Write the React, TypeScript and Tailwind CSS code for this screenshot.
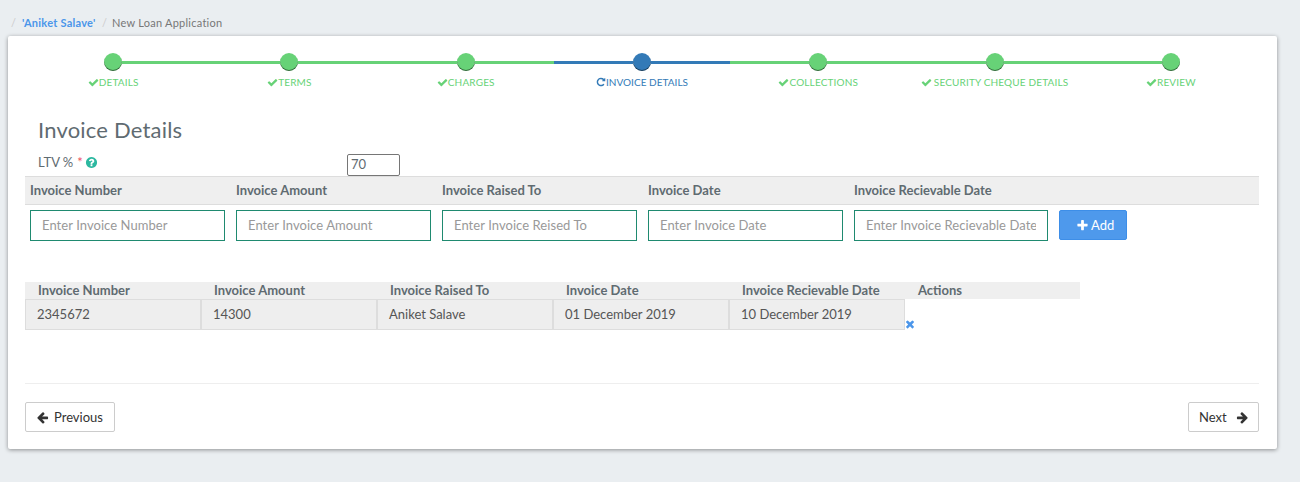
import React from 'react';

const paths = {
  check:
    'M1671 566q0 40-28 68l-724 724-136 136q-28 28-68 28t-68-28l-136-136-362-362q-28-28-28-68t28-68l136-136q28-28 68-28t68 28l294 295 656-657q28-28 68-28t68 28l136 136q28 28 28 68z',
  plus: 'M1600 736v192q0 40-28 68t-68 28h-416v416q0 40-28 68t-68 28h-192q-40 0-68-28t-28-68v-416h-416q-40 0-68-28t-28-68v-192q0-40 28-68t68-28h416v-416q0-40 28-68t68-28h192q40 0 68 28t28 68v416h416q40 0 68 28t28 68z',
  times:
    'M1490 1322q0 40-28 68l-136 136q-28 28-68 28t-68-28l-294-294-294 294q-28 28-68 28t-68-28l-136-136q-28-28-28-68t28-68l294-294-294-294q-28-28-28-68t28-68l136-136q28-28 68-28t68 28l294 294 294-294q28-28 68-28t68 28l136 136q28 28 28 68t-28 68l-294 294 294 294q28 28 28 68z',
  left: 'M1664 896v128q0 53-32.5 90.5t-84.5 37.5h-704l293 294q38 36 38 90t-38 90l-75 76q-37 37-90 37-52 0-91-37l-651-652q-37-37-37-90 0-52 37-91l651-650q38-38 91-38 52 0 90 38l75 74q38 38 38 91t-38 91l-293 293h704q52 0 84.5 37.5t32.5 90.5z',
  right:
    'M1600 960q0 54-37 91l-651 651q-39 37-91 37-51 0-90-37l-75-75q-38-38-38-91t38-91l293-293h-704q-52 0-84.5-37.5t-32.5-90.5v-128q0-53 32.5-90.5t84.5-37.5h704l-293-294q-38-36-38-90t38-90l75-75q38-38 90-38 53 0 91 38l651 651q37 35 37 90z',
  question:
    'M1024 1376v-192q0-14-9-23t-23-9h-192q-14 0-23 9t-9 23v192q0 14 9 23t23 9h192q14 0 23-9t9-23zm256-672q0-88-55.5-163t-138.5-116-170-41q-243 0-371 213-15 24 8 42l132 100q7 6 19 6 16 0 25-12 53-68 86-92 34-24 86-24 48 0 85.500 26t37.500 59q0 38-20 61t-68 45q-63 28-115.500 86.500t-52.500 125.500v36q0 14 9 23t23 9h192q14 0 23-9t9-23q0-19 21.500-49.500t54.500-49.500q32-18 49-28.500t46-35 44.500-48 28-60.500 12.500-81zm384 192q0 209-103 385.500t-279.500 279.500-385.500 103-385.500-103-279.500-279.500-103-385.500 103-385.500 279.500-279.500 385.500-103 385.500 103 279.500 279.500 103 385.500z',
  repeat:
    'M1664 256v448q0 26-19 45t-45 19h-448q-42 0-59-40-17-39 14-69l138-138q-148-137-349-137-104 0-198.500 40.500t-163.500 109.500-109.500 163.500-40.500 198.500 40.500 198.500 109.500 163.500 163.500 109.500 198.500 40.500q119 0 225-52t179-147q7-10 23-12 15 0 25 9l137 138q9 8 9.500 20.500t-7.500 22.500q-109 132-264 204.500t-327 72.500q-156 0-298-61t-245-164-164-245-61-298 61-298 164-245 245-164 298-61q147 0 284.500 55.500t244.500 156.500l130-129q29-31 70-14 39 17 39 59z',
};

function Icon({ name, className }: { name: keyof typeof paths; className: string }) {
  return (
    <svg viewBox="0 0 1792 1792" className={`shrink-0 fill-current ${className}`}>
      <path d={paths[name]} />
    </svg>
  );
}

type Step = { label: string; current?: boolean; spaced?: boolean };

const steps: Step[] = [
  { label: 'DETAILS' },
  { label: 'TERMS' },
  { label: 'CHARGES' },
  { label: 'INVOICE DETAILS', current: true },
  { label: 'COLLECTIONS' },
  { label: 'SECURITY CHEQUE DETAILS', spaced: true },
  { label: 'REVIEW' },
];

const fields = [
  { label: 'Invoice Number', hint: 'Enter Invoice Number' },
  { label: 'Invoice Amount', hint: 'Enter Invoice Amount' },
  { label: 'Invoice Raised To', hint: 'Enter Invoice Reised To' },
  { label: 'Invoice Date', hint: 'Enter Invoice Date' },
  { label: 'Invoice Recievable Date', hint: 'Enter Invoice Recievable Date' },
];

const row = ['2345672', '14300', 'Aniket Salave', '01 December 2019', '10 December 2019'];

function Stepper() {
  return (
    <ol className="grid grid-cols-7">
      {steps.map((s, i) => (
        <li key={s.label} className={`flex flex-col items-center ${s.current ? 'text-[#337ab7]' : 'text-[#67d277]'}`}>
          <div className="flex h-[18px] w-full items-center">
            <span className={`h-[3px] flex-1 ${i === 0 ? '' : 'bg-current'}`} />
            <span className="h-[18px] w-[18px] rounded-full bg-current shadow-[inset_0_-1px_0_rgba(0,0,0,0.5)]" />
            <span className={`h-[3px] flex-1 ${i === steps.length - 1 ? '' : 'bg-current'}`} />
          </div>
          <div className={`mt-[3px] flex h-4 items-center text-[10px] whitespace-nowrap ${s.current ? 'tracking-[0.04px]' : 'tracking-[0.16px]'} ${s.spaced ? 'gap-[2px]' : ''}`}>
            <Icon name={s.current ? 'repeat' : 'check'} className={s.current ? 'h-[10px] w-[10px]' : 'h-[11px] w-[11px]'} />
            <span>{s.label}</span>
          </div>
        </li>
      ))}
    </ol>
  );
}

export default function App() {
  return (
    <div className="h-[482px] w-full bg-[#eaeef1] pt-[15px] font-['Lato',sans-serif] text-[13px] text-[#5f6b71]">
      <nav className="flex h-4 items-center pl-[11px] text-[11px] tracking-[0.25px]">
        <span className="w-[11px] text-[#ccc]">/</span>
        <a className="w-[80px] font-bold text-[#4b96ea]">'Aniket Salave'</a>
        <span className="w-[10px] text-[#ccc]">/</span>
        <span className="text-[#777]">New Loan Application</span>
      </nav>

      <main className="mt-[5px] ml-2 h-[413px] w-[1268.5px] rounded-[2px] bg-white pr-[17.5px] pl-[17px] pt-[17px] shadow-[0_1px_4px_rgba(0,0,0,0.4)]">
        <Stepper />

        <h1 className="mt-[26px] h-8 pl-[13px] text-[22px] leading-7 tracking-[0.2px]">Invoice Details</h1>

        <div className="flex h-[28px] pl-[13px]">
          <label className="mt-[6px] flex h-4 w-[309px] items-center leading-4">
            LTV %<span className="ml-1 text-[#ed5565]">*</span>
            <Icon name="question" className="ml-[2px] h-[13px] w-[13px] text-[#2cb8a0]" />
          </label>
          <input defaultValue="70" className="mt-[6px] h-[22px] w-[53px] rounded-[2px] border border-[#767676] pb-[2px] pl-[3px] text-[13px]" />
        </div>

        <div className="grid h-[29px] grid-cols-[repeat(5,206px)_1fr] items-center border-y border-[#ddd] bg-[#efefef] pt-px font-bold">
          {fields.map((f) => (
            <span key={f.label} className="px-[5px]">{f.label}</span>
          ))}
        </div>
        <div className="grid grid-cols-[repeat(4,206px)_205px_1fr] pt-[5px]">
          {fields.map((f) => (
            <div key={f.label} className="pr-[6px] pl-[5px]">
              <input placeholder={f.hint} className="h-[31px] w-full border border-[#1f8a70] px-[11px] pb-px last:tracking-[0.06px] placeholder:text-[#999]" />
            </div>
          ))}
          <div className="pl-[5px]">
            <button className="flex h-[30px] w-[68px] items-center rounded-[2px] border border-[#3d8ee8] bg-[#4e99ec] pt-px pl-4 text-white">
              <Icon name="plus" className="mr-[2px] h-[13px] w-[13px]" />
              Add
            </button>
          </div>
        </div>

        <div className="mt-[41px] w-[1055px]">
          <div className="grid h-[17px] grid-cols-[repeat(6,176px)] overflow-hidden bg-[#efefef] leading-4 font-bold">
            {[...fields.map((f) => f.label), 'Actions'].map((l) => (
              <span key={l} className="pl-[13px]">{l}</span>
            ))}
          </div>
          <div className="flex h-[31px]">
            {row.map((v) => (
              <div key={v} className="flex w-[176px] items-center border border-[#ddd] bg-[#eee] pl-[11px] text-[#555]">{v}</div>
            ))}
            <button className="mt-[19px] -ml-px h-3 text-[#4b96ea]">
              <Icon name="times" className="h-3 w-3" />
            </button>
          </div>
        </div>

        <div className="mt-[53px] flex justify-between border-t border-[#eee] pt-[18px] text-[#333]">
          <button className="flex h-[30px] w-[90px] items-center rounded-[2px] border border-[#ccc] pt-px pl-[10px]">
            <Icon name="left" className="mr-[5px] h-[13px] w-[13px]" />
            Previous
          </button>
          <button className="flex h-[30px] w-[71px] items-center justify-between rounded-[2px] border border-[#ccc] pt-px pr-[9px] pl-[10px]">
            Next
            <Icon name="right" className="h-[13px] w-[13px]" />
          </button>
        </div>
      </main>
    </div>
  );
}
